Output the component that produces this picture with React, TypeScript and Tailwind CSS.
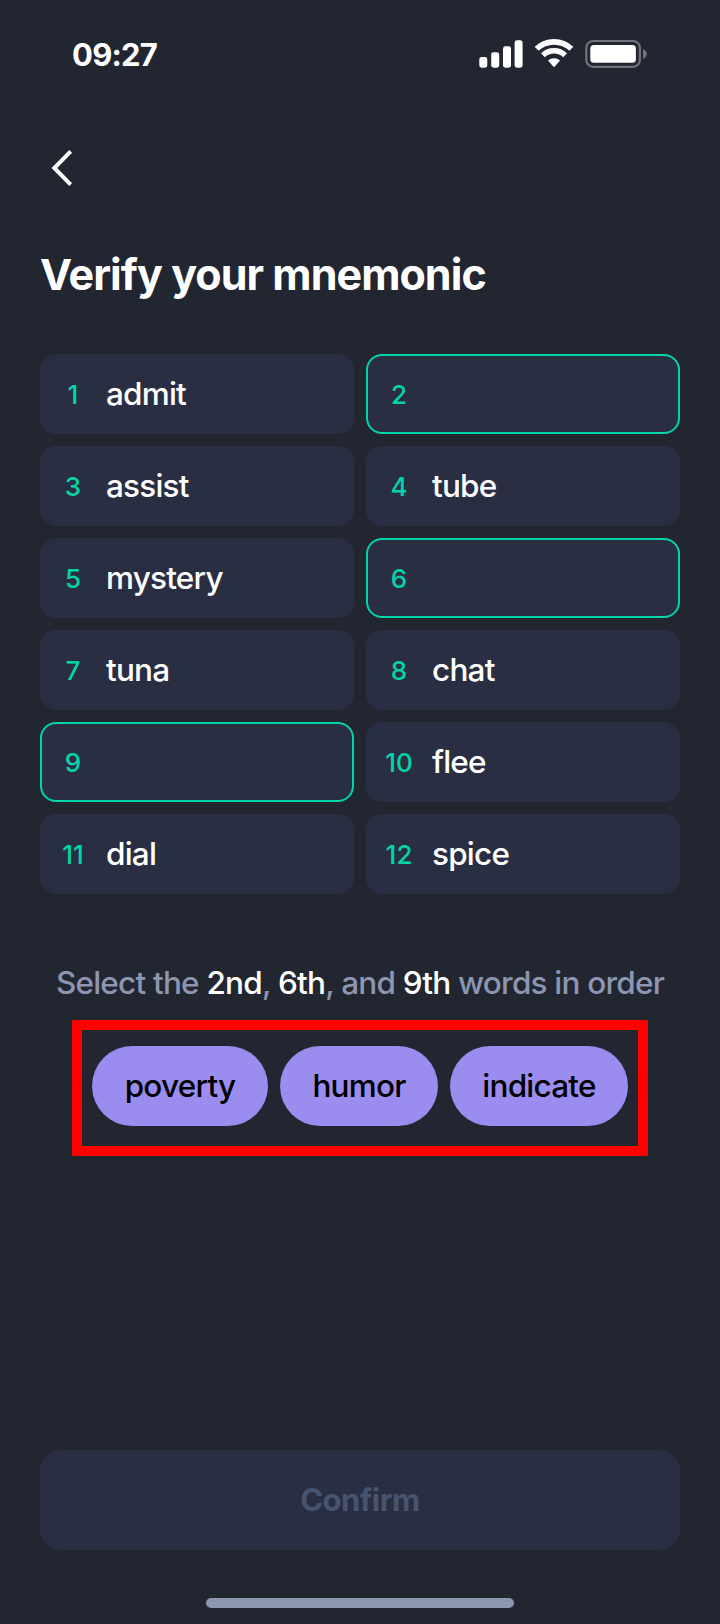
const words = [
  { id: 1, word: 'admit' },
  { id: 2, word: '' },
  { id: 3, word: 'assist' },
  { id: 4, word: 'tube' },
  { id: 5, word: 'mystery' },
  { id: 6, word: '' },
  { id: 7, word: 'tuna' },
  { id: 8, word: 'chat' },
  { id: 9, word: '' },
  { id: 10, word: 'flee' },
  { id: 11, word: 'dial' },
  { id: 12, word: 'spice' },
];

const options = [
  { word: 'poverty', width: 'w-[176px]' },
  { word: 'humor', width: 'w-[158px]' },
  { word: 'indicate', width: 'w-[178px]' },
];

function StatusBar() {
  return (
    <div className="flex h-[108px] items-start justify-between pl-[72px] pr-[72px] pt-[34px] text-white">
      <span className="pt-px text-[31px] leading-[40px] font-[650] tracking-[-0.025em]">09:27</span>
      <svg width="170" height="32" viewBox="0 0 170 32" fill="none" className="mt-1">
        <g fill="white">
          <rect x="1.3" y="19" width="8" height="10.7" rx="2.4" />
          <rect x="13.2" y="14.2" width="8" height="15.5" rx="2.4" />
          <rect x="25" y="8.3" width="8" height="21.4" rx="2.4" />
          <rect x="36.6" y="2.3" width="8" height="27.4" rx="2.4" />
        </g>
        <g stroke="white" strokeWidth="5.6">
          <path d="M58.6 10.8 A25.2 25.2 0 0 1 93.4 10.8" />
          <path d="M64.9 17.3 A16 16 0 0 1 87.1 17.3" />
        </g>
        <path d="M70 22.6 A8.6 8.6 0 0 1 82 22.6 L76.5 28.7 Q76 29.2 75.5 28.7 Z" fill="white" />
        <rect x="108.3" y="3" width="53.6" height="25.8" rx="6.8" stroke="#70737c" strokeWidth="2.2" />
        <rect x="112.3" y="7" width="45.6" height="17.8" rx="3.6" fill="white" />
        <path d="M165 11 C167.6 12.2 168.8 13.9 168.8 16 C168.8 18.1 167.6 19.8 165 21 Z" fill="#70737c" />
      </svg>
    </div>
  );
}

export default function App() {
  return (
    <div className="flex h-[1624px] w-[720px] flex-col overflow-hidden bg-[#222630] font-['Inter',sans-serif]">
      <StatusBar />

      <div className="flex h-[120px] items-center pl-[50px]">
        <svg width="24" height="40" viewBox="0 0 24 40" fill="none">
          <path d="M20.7 3.4 L4.3 20 L20.7 36.6" stroke="white" strokeWidth="4" />
        </svg>
      </div>

      <h1 className="mt-[18px] h-[56px] pl-10 text-[43px] leading-[56px] font-bold tracking-[-0.022em] text-white">
        Verify your mnemonic
      </h1>

      <div className="mx-10 mt-[52px] grid grid-cols-2 gap-3">
        {words.map(({ id, word }) => (
          <div
            key={id}
            className={`flex h-20 items-center rounded-2xl border-2 bg-[#2a2e42] pl-[10px] ${
              word ? 'border-[#2a2e42]' : 'border-[#00d5aa]'
            }`}
          >
            <span className="w-[42px] text-center text-[26px] font-[450] text-[#00d5aa]">{id}</span>
            <span className="ml-3 text-[31.5px] leading-[40px] font-[450] tracking-[-0.025em] text-white">{word}</span>
          </div>
        ))}
      </div>

      <p className="mt-[69px] text-center text-[31.5px] leading-[40px] font-[450] tracking-[-0.025em] text-[#8c96b0]">
        Select the <span className="text-white">2nd</span>, <span className="text-white">6th</span>, and{' '}
        <span className="text-white">9th</span> words in order
      </p>

      <div className="mx-[72px] mt-[17px] flex h-[136px] items-start justify-center gap-3 border-[10px] border-[#ff0000] pt-4">
        {options.map((option) => (
          <button
            key={option.word}
            className={`h-20 rounded-full bg-[#9b8df0] pb-px text-[31.5px] font-[450] tracking-[-0.025em] text-black ${option.width}`}
          >
            {option.word}
          </button>
        ))}
      </div>

      <div className="mt-auto px-10 pb-4">
        <button className="h-[100px] w-full rounded-[20px] bg-[#2a2e42] pt-px text-[31px] font-[650] tracking-[-0.018em] text-[#475470]">
          Confirm
        </button>
        <div className="mx-auto mt-12 h-[10px] w-[308px] rounded-[5px] bg-[#8c96b0]" />
      </div>
    </div>
  );
}
